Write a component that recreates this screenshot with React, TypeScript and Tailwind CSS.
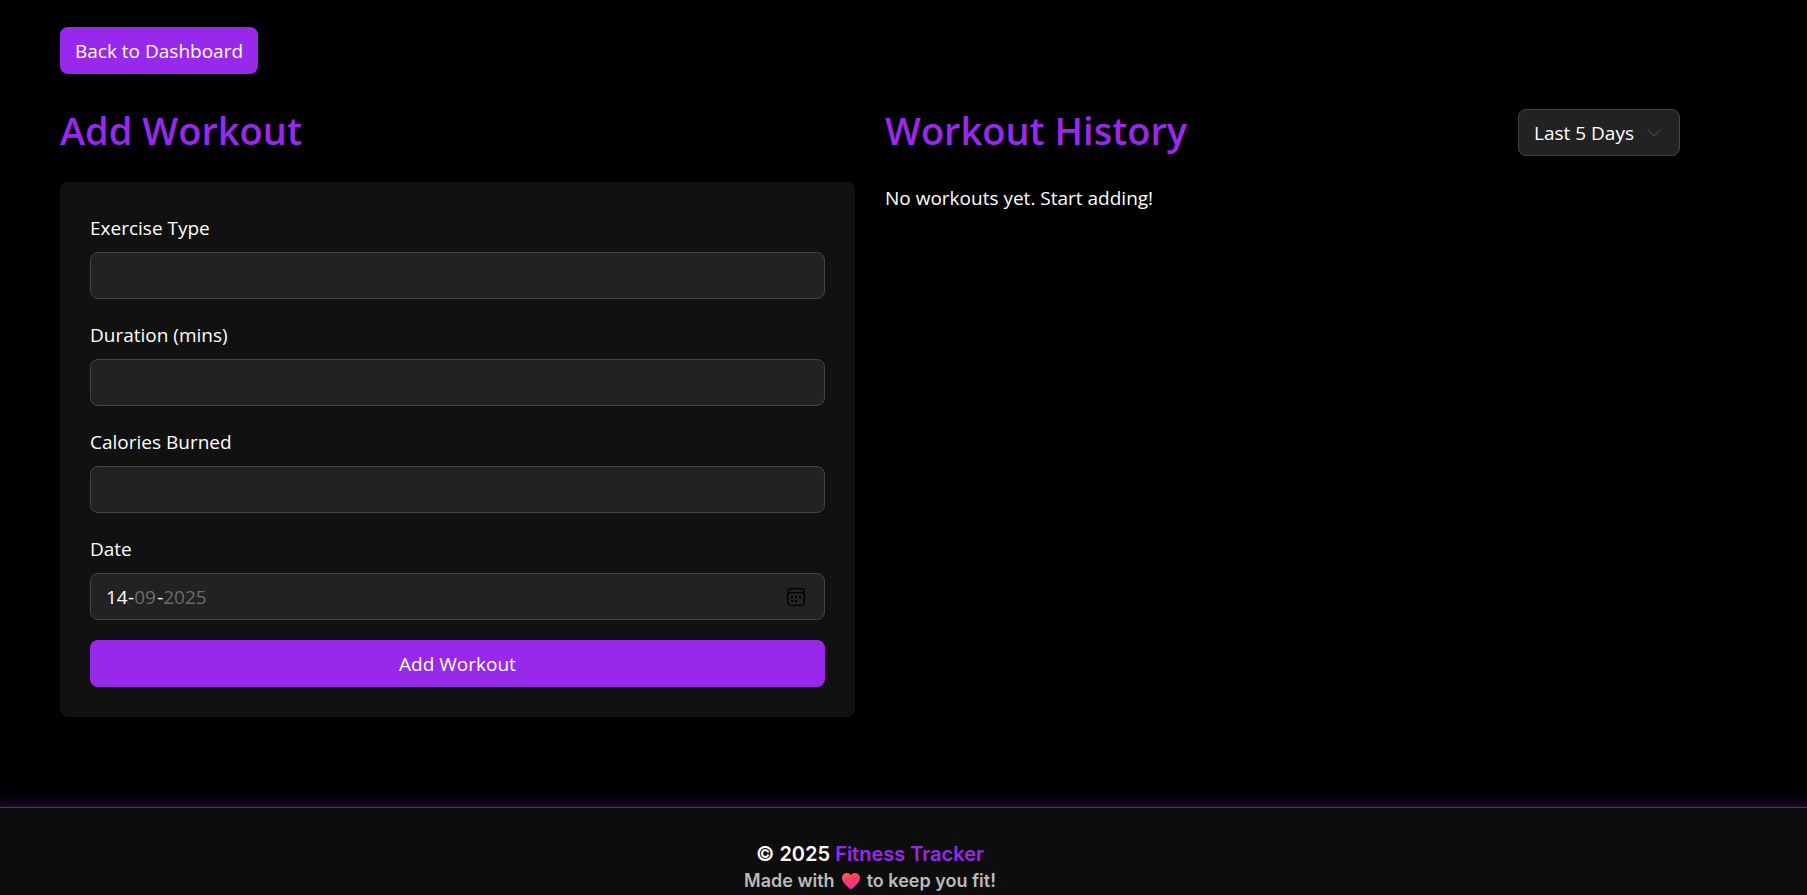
import { useState } from "react";

const fields = [
  { id: "exercise", label: "Exercise Type", type: "text" },
  { id: "duration", label: "Duration (mins)", type: "text" },
  { id: "calories", label: "Calories Burned", type: "text" },
];

const control =
  "h-[47px] w-full rounded-lg border border-[#444] bg-[#222] px-4 text-[19px] text-white outline-none";

function CalendarIcon() {
  return (
    <svg width="18" height="18" viewBox="0 0 18 18" fill="none" stroke="#000" strokeWidth="1.3">
      <rect x="0.7" y="0.7" width="16.6" height="16.6" rx="3" />
      <path d="M1 4.6h16" />
      <path d="M4 9h2M8 9h2M12 9h2M4 13h2M8 13h2" strokeWidth="2" />
    </svg>
  );
}

function DateField() {
  return (
    <div className="mb-5">
      <label htmlFor="date-day" className="mb-2 block leading-8">Date</label>
      <div className="flex h-[47px] items-center rounded-lg border border-[#444] bg-[#222] pr-[19px] pl-[15px]">
        <input
          id="date-day"
          defaultValue="14"
          className="w-[22px] bg-transparent text-white outline-none"
        />
        <span>-</span>
        <input
          aria-label="Month"
          defaultValue="09"
          className="w-[23px] bg-transparent text-[#6b6b6b] outline-none"
        />
        <span>-</span>
        <input
          aria-label="Year"
          defaultValue="2025"
          className="w-12 bg-transparent text-[#6b6b6b] outline-none"
        />
        <button type="button" aria-label="Open calendar" className="ml-auto">
          <CalendarIcon />
        </button>
      </div>
    </div>
  );
}

function Heart() {
  return (
    <svg width="18" height="16" viewBox="0 0 18 16" className="mx-[7px] inline-block" aria-hidden="true">
      <defs>
        <linearGradient id="heart" x1="0" y1="0" x2="0.3" y2="1">
          <stop offset="0" stopColor="#ff6a5c" />
          <stop offset="0.5" stopColor="#fb3a63" />
          <stop offset="1" stopColor="#f02f9c" />
        </linearGradient>
      </defs>
      <path
        d="M9 2.2C10 .8 11.400 0 13 0c2.800 0 5 2.200 5 5 0 4-4 7.200-7.600 10.400-.8.800-2 .8-2.800 0C4 12.200 0 9 0 5c0-2.800 2.200-5 5-5 1.600 0 3 .8 4 2.200z"
        fill="url(#heart)"
      />
    </svg>
  );
}

export default function App() {
  const [range, setRange] = useState("5");
  return (
    <div className="flex min-h-screen flex-col overflow-x-hidden bg-black font-['Open_Sans',sans-serif] text-[19px] leading-[30px] text-white">
      <main className="mr-[67px] grow px-[60px] pt-[27px] pb-[90px]">
        <a href="#dashboard" className="inline-flex h-[47px] items-center rounded-lg bg-[#9929ea] px-[15px]">
          Back to Dashboard
        </a>
        <div className="mt-[35px] grid grid-cols-2 gap-[30px]">
          <section>
            <h2 className="mb-[31px] text-[38px] leading-[42px] font-semibold text-[#9929ea]">Add Workout</h2>
            <form className="rounded-lg bg-[#111] p-[30px]" onSubmit={(e) => e.preventDefault()}>
              {fields.map((f) => (
                <div key={f.id} className="mb-5">
                  <label htmlFor={f.id} className="mb-2 block leading-8">{f.label}</label>
                  <input id={f.id} type={f.type} className={control} />
                </div>
              ))}
              <DateField />
              <button type="submit" className="h-[47px] w-full rounded-lg bg-[#9929ea]">
                Add Workout
              </button>
            </form>
          </section>
          <section>
            <div className="mb-[27px] flex items-start justify-between">
              <h2 className="text-[38px] leading-[42px] font-semibold text-[#9929ea]">Workout History</h2>
              <div className="grid items-center">
                <select
                  aria-label="History range"
                  value={range}
                  onChange={(e) => setRange(e.target.value)}
                  className="col-start-1 row-start-1 h-[47px] w-[162px] appearance-none rounded-lg border border-[#444] bg-[#222] pl-[15px] text-white"
                >
                  <option value="5">Last 5 Days</option>
                  <option value="10">Last 10 Days</option>
                </select>
                <svg
                  width="14"
                  height="8"
                  viewBox="0 0 14 8"
                  className="pointer-events-none col-start-1 row-start-1 mr-[19px] justify-self-end"
                  fill="none"
                  stroke="#343a40"
                  strokeWidth="1.8"
                  strokeLinecap="round"
                  strokeLinejoin="round"
                >
                  <path d="M1 1l6 6 6-6" />
                </svg>
              </div>
            </div>
            <p>No workouts yet. Start adding!</p>
          </section>
        </div>
      </main>
      <footer className="border-t border-[#444] bg-[#0d0d0d] pt-[31px] pb-[2px] font-['Inter',sans-serif] font-semibold shadow-[0_8px_15px_10px_rgba(153,41,234,0.3)]">
        <div className="mr-[67px] text-center">
          <p className="text-[20px] leading-[30px]">
            © 2025 <span className="text-[#9929ea]">Fitness Tracker</span>
          </p>
          <p className="flex items-center justify-center text-[18px] leading-6 text-[#bbb]">
            Made with
            <Heart />
            to keep you fit!
          </p>
        </div>
      </footer>
    </div>
  );
}
